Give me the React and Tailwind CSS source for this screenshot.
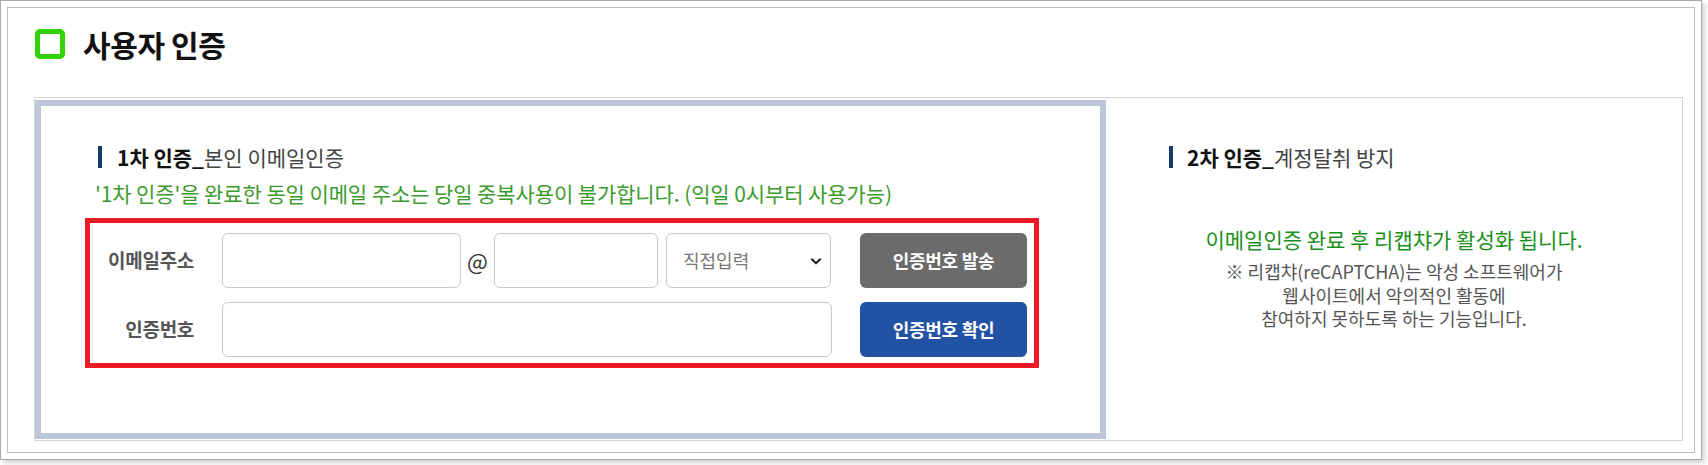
export default function App() {
  return (
    <div
      className="w-[1708px] h-[465px] bg-white text-[#333]"
      style={{ fontFamily: '"Noto Sans CJK KR", "Noto Sans", sans-serif' }}
    >
      <div className="w-[1702px] h-[460px] border border-[#aaaaaa] bg-white p-[6px] shadow-[3px_3px_5px_rgba(0,0,0,0.18)]">
        <div className="h-full border border-[#bdbdbd] pl-[26px] pr-[11px]">
          {/* page title */}
          <div className="h-[72px] flex items-center gap-[18px] pl-px">
            <span className="w-[30px] h-[30px] border-[5px] border-[#33d100] rounded-[5px] shrink-0" />
            <h1 className="text-[30px] font-bold text-[#111] leading-none tracking-[-0.4px]">사용자 인증</h1>
          </div>

          {/* content box */}
          <div className="mt-[17px] h-[344px] border border-[#d5d5d5] flex pt-[2px] pb-px">
            {/* 1st step */}
            <div className="w-[1071px] h-full border-[6px] border-[#bbc7d8] pt-[40px]">
              <div className="pl-[57px] h-[22px] flex items-center gap-[15px]">
                <span className="w-[4px] h-[22px] bg-[#163a6b]" />
                <p className="text-[21px] leading-none text-[#444]">
                  <b className="font-bold text-[#111]">1차 인증_</b>본인 이메일인증
                </p>
              </div>
              <p className="mt-[14px] pl-[54px] h-[22px] leading-[22px] text-[21px] tracking-[-0.1px] text-[#3c9a2e]">
                '1차 인증'을 완료한 동일 이메일 주소는 당일 중복사용이 불가합니다. (익일 0시부터 사용가능)
              </p>

              <div className="mt-[14px] ml-[44px] w-[954px] h-[150px] border-[5px] border-[#ed1c24] pt-[10px] flex flex-col gap-[14px]">
                <div className="h-[55px] flex items-center">
                  <label className="w-[104px] text-right text-[19px] font-bold text-[#555] tracking-[-0.3px] whitespace-nowrap">이메일주소</label>
                  <input className="ml-[28px] w-[239px] h-[55px] border border-[#c8c8c8] rounded-[6px] bg-white" />
                  <span className="w-[33px] text-center text-[22px] text-[#333]">@</span>
                  <input className="w-[164px] h-[55px] border border-[#c8c8c8] rounded-[6px] bg-white" />
                  <div className="ml-[8px] w-[165px] h-[55px] border border-[#c8c8c8] rounded-[6px] bg-white flex items-center justify-between pl-[16px] pr-[7px]">
                    <span className="text-[18px] text-[#777]">직접입력</span>
                    <svg width="14" height="14" viewBox="0 0 24 24" fill="none" stroke="#222" strokeWidth="3.5" strokeLinecap="round" strokeLinejoin="round">
                      <path d="M5 9l7 7 7-7" />
                    </svg>
                  </div>
                  <button className="ml-[29px] w-[167px] h-[55px] rounded-[6px] bg-[#6b6b6b] text-white text-[18px] font-bold tracking-[-0.3px]">
                    인증번호 발송
                  </button>
                </div>
                <div className="h-[55px] flex items-center">
                  <label className="w-[104px] text-right text-[19px] font-bold text-[#555] tracking-[-0.3px] whitespace-nowrap">인증번호</label>
                  <input className="ml-[28px] w-[610px] h-[55px] border border-[#c8c8c8] rounded-[6px] bg-white" />
                  <button className="ml-[28px] w-[167px] h-[55px] rounded-[6px] bg-[#2152a3] text-white text-[18px] font-bold tracking-[-0.3px]">
                    인증번호 확인
                  </button>
                </div>
              </div>
            </div>

            {/* 2nd step */}
            <div className="flex-1 pt-[46px]">
              <div className="pl-[63px] h-[22px] flex items-center gap-[14px]">
                <span className="w-[4px] h-[22px] bg-[#163a6b]" />
                <p className="text-[21px] leading-none text-[#444]">
                  <b className="font-bold text-[#111]">2차 인증_</b>계정탈취 방지
                </p>
              </div>
              <div className="text-center">
                <p className="mt-[57px] h-[28px] leading-[28px] text-[21px] text-[#1b8f1b]">
                  이메일인증 완료 후 리캡챠가 활성화 됩니다.
                </p>
                <p className="mt-[7px] text-[18px] leading-[23.5px] text-[#555]">
                  ※ 리캡챠(reCAPTCHA)는 악성 소프트웨어가
                  <br />
                  웹사이트에서 악의적인 활동에
                  <br />
                  참여하지 못하도록 하는 기능입니다.
                </p>
              </div>
            </div>
          </div>
        </div>
      </div>
    </div>
  );
}
